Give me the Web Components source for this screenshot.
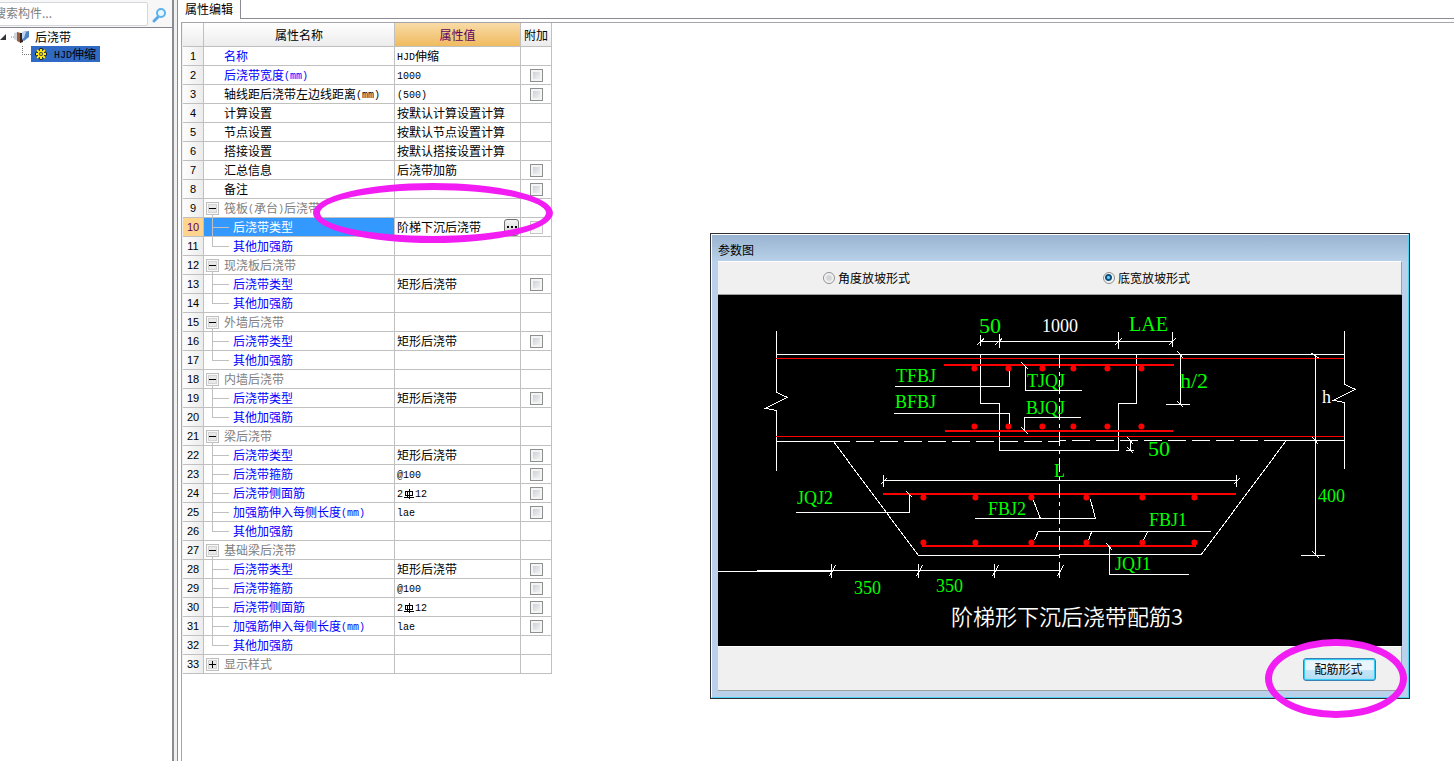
<!DOCTYPE html>
<html lang="zh-CN">
<head>
<meta charset="utf-8">
<title>属性编辑</title>
<style>
	html, body { height: 100%; }
	body {
		margin: 0;
		overflow: hidden;
		background: #fff;
		color: #000;
		font: 12px/18px "Noto Sans CJK SC", sans-serif;
	}
</style>
</head>
<body>
<app-shell>
	<component-tree slot="side"></component-tree>
	<tab-panel slot="main" label="属性编辑">
		<property-grid></property-grid>
	</tab-panel>
	<param-dialog slot="over" caption="参数图">
		<slope-options slot="top"></slope-options>
		<section-drawing></section-drawing>
		<aero-button slot="bottom">配筋形式</aero-button>
	</param-dialog>
	<mark-ring slot="over" class="value"></mark-ring>
	<mark-ring slot="over" class="action"></mark-ring>
</app-shell>

<script>
// Base class: clones the markup of the subclass into an open shadow root.
class UIElement extends HTMLElement {
	constructor() {
		super();
		let templateEl = document.createElement('template');
		templateEl.innerHTML = this.markup();
		this.attachShadow({ mode: 'open' }).appendChild(templateEl.content.cloneNode(true));
	}
	markup() { return ''; }
}

// SimSun style half-width latin runs next to the full-width characters.
function mixed(text) {
	return text.replace(/[\x21-\x7e]+/g, '<span class="half">$&</span>');
}

class AppShell extends UIElement {
	markup() {
		return `
			<style>
				:host { display: flex; height: 100%; position: relative; }
				.side { flex: 0 0 172px; overflow: hidden; border-right: 2px solid #8a8b93; }
				.split { flex: 0 0 3px; background: #f0f0f0; border-right: 1px solid #8a8b93; }
				.main { flex: 1; min-width: 0; display: flex; }
				::slotted(tab-panel) { flex: 1; min-width: 0; }
				::slotted(param-dialog) { position: absolute; left: 710px; top: 233px; width: 700px; }
				::slotted(mark-ring) { position: absolute; pointer-events: none; }
				::slotted(.value) { left: 313px; top: 183px; width: 240px; height: 60px; }
				::slotted(.action) { left: 1265px; top: 639px; width: 142px; height: 79px; }
			</style>
			<div class="side"><slot name="side"></slot></div>
			<div class="split"></div>
			<div class="main"><slot name="main"></slot></div>
			<slot name="over"></slot>
			`;
	}
}

class MarkRing extends UIElement {
	markup() {
		return `
			<style>
				:host { display: block; box-sizing: border-box; border: 7px solid #f21df2; border-radius: 50%; }
			</style>
			`;
	}
}

class ComponentTree extends UIElement {
	markup() {
		return `
			<style>
				:host { display: block; }
				.search { display: flex; height: 27px; align-items: center; margin-left: -8px; background: #f7f7f7; border-bottom: 1px solid #85868e; }
				input { flex: 1; min-width: 0; height: 24px; box-sizing: border-box; padding: 0 2px 2px 1px; border: 1px solid #d4d6dc; border-radius: 2px; background: #fff; font: inherit; }
				input::placeholder { color: #808080; }
				.search button { width: 24px; height: 24px; padding: 0; border: 0; background: none; }
				svg { display: block; }
				ul { list-style: none; margin: 0; padding: 0; }
				.row { display: flex; align-items: center; height: 18px; }
				.arrow { margin-right: 4px; }
				.row .name { margin-left: 5px; }
				.leaf { display: flex; align-items: center; }
				.sel { display: flex; align-items: center; height: 16px; padding: 0 4px; background: #316ac5; }
				.sel .name { margin-left: 7px; }
				.half { font: 10px "Liberation Mono", monospace; vertical-align: 1px; }
			</style>
			<div class="search">
				<input type="text" aria-label="搜索构件" placeholder="搜索构件...">
				<button aria-label="搜索">
					<svg width="24" height="24" viewBox="0 0 24 24" fill="none">
						<path d="M10 15L6 19" stroke="#5aa9e6" stroke-width="3" stroke-linecap="round"/>
						<circle cx="13" cy="11" r="4" fill="#eaf6ff" stroke="#5ab4f0" stroke-width="2"/>
					</svg>
				</button>
			</div>
			<ul>
				<li>
					<div class="row">
						<svg class="arrow" width="7" height="8" viewBox="0 0 7 8"><path d="M6 1V7H0Z" fill="#333"/></svg>
						<svg width="19" height="14" viewBox="0 0 19 14">
							<path d="M0 7H4" stroke="#888" stroke-dasharray="1 1"/>
							<path d="M3 3L7 2V11L3 9Z" fill="#cfd6dc"/>
							<path d="M6 2L10 3V13L6 11Z" fill="#a05c3a"/>
							<path d="M9 3H12V12L9 13Z" fill="#35241e"/>
							<path d="M11 2L18 1V7L13 11L11 10Z" fill="#4d82c4"/>
							<path d="M11 2L15 2L13 8L11 9Z" fill="#bcd3ee"/>
						</svg>
						<span class="name">后浇带</span>
					</div>
					<ul>
						<li class="leaf">
							<svg width="31" height="16" viewBox="0 0 31 16"><path d="M22.500 0V8.500H31" fill="none" stroke="#777" stroke-dasharray="1 1"/></svg>
							<div class="sel">
								<svg width="12" height="12" viewBox="0 0 12 12" fill="none">
									<path d="M6 0V12M0 6H12M2 2L10 10M10 2L2 10" stroke="#222" stroke-width="3"/>
									<path d="M6 1V11M1 6H11M2 2L10 10M10 2L2 10" stroke="#ffe916" stroke-width="2"/>
									<circle cx="6" cy="6" r="3" fill="#ffe916"/><circle cx="6" cy="6" r="2" fill="#444"/><circle cx="6" cy="6" r="1" fill="#ffe916"/>
								</svg>
								<span class="name">${mixed('HJD伸缩')}</span>
							</div>
						</li>
					</ul>
				</li>
			</ul>
			`;
	}
}

class TabPanel extends UIElement {
	markup() {
		return `
			<style>
				:host { display: flex; flex-direction: column; }
				.tabs { display: flex; height: 19px; }
				.tab { width: 63px; padding: 0 0 4px 7px; box-sizing: border-box; border: 0; border-right: 1px solid #8a8b93; background: #fff; font: inherit; text-align: left; }
				.rest { flex: 1; border-bottom: 1px solid #8a8b93; }
				.body { flex: 1; margin: 3px 0 0 3px; border: solid #a5a6ac; border-width: 1px 0 0 1px; }
			</style>
			<div class="tabs"><button class="tab"></button><div class="rest"></div></div>
			<div class="body"><slot></slot></div>
			`;
	}
	connectedCallback() {
		this.shadowRoot.querySelector('.tab').textContent = this.getAttribute('label');
	}
}

// kind: b = plain blue, k = plain black, g = group, c = child, e = last child, + = closed group
const ROWS = [
	['b', '名称', 'HJD伸缩', 0],
	['b', '后浇带宽度(mm)', '1000', 1],
	['k', '轴线距后浇带左边线距离(mm)', '(500)', 1],
	['k', '计算设置', '按默认计算设置计算', 0],
	['k', '节点设置', '按默认节点设置计算', 0],
	['k', '搭接设置', '按默认搭接设置计算', 0],
	['k', '汇总信息', '后浇带加筋', 1],
	['k', '备注', '', 1],
	['g', '筏板(承台)后浇带', '', 0],
	['c', '后浇带类型', '阶梯下沉后浇带', 1, 'current'],
	['e', '其他加强筋', '', 0],
	['g', '现浇板后浇带', '', 0],
	['c', '后浇带类型', '矩形后浇带', 1],
	['e', '其他加强筋', '', 0],
	['g', '外墙后浇带', '', 0],
	['c', '后浇带类型', '矩形后浇带', 1],
	['e', '其他加强筋', '', 0],
	['g', '内墙后浇带', '', 0],
	['c', '后浇带类型', '矩形后浇带', 1],
	['e', '其他加强筋', '', 0],
	['g', '梁后浇带', '', 0],
	['c', '后浇带类型', '矩形后浇带', 1],
	['c', '后浇带箍筋', '@100', 1],
	['c', '后浇带侧面筋', '2#12', 1],
	['c', '加强筋伸入每侧长度(mm)', 'lae', 1],
	['e', '其他加强筋', '', 0],
	['g', '基础梁后浇带', '', 0],
	['c', '后浇带类型', '矩形后浇带', 1],
	['c', '后浇带箍筋', '@100', 1],
	['c', '后浇带侧面筋', '2#12', 1],
	['c', '加强筋伸入每侧长度(mm)', 'lae', 1],
	['e', '其他加强筋', '', 0],
	['+', '显示样式', '', 0]
];

// Rebar grade mark that stands between count and diameter.
const REBAR = '<svg class="rebar" width="12" height="12" viewBox="0 0 12 12" fill="none" stroke="#000" shape-rendering="crispEdges"><path d="M2.500 3.500H9.500V7.500H2.500ZM6.500 1V11M4.500 3V10M1 9.500H11"/></svg>';

class PropertyGrid extends UIElement {
	markup() {
		return `
			<style>
				:host { display: block; }
				table { table-layout: fixed; width: 370px; border-collapse: separate; border-spacing: 0; border-left: 1px solid #f0f0f0; }
				.c1 { width: 21px; } .c2 { width: 191px; } .c3 { width: 126px; } .c4 { width: 31px; }
				th, td { box-sizing: border-box; height: 19px; padding: 0; border: solid #c0c0c0; border-width: 0 1px 1px 0; font-weight: normal; line-height: 18px; white-space: nowrap; overflow: hidden; }
				thead th { height: 24px; background: linear-gradient(#fff, #ececec); }
				thead .hot { background: linear-gradient(#f8dba6, #f0bb5f); color: #5c0060; }
				tbody th { background: linear-gradient(90deg, #fdfdfd, #ececec); font: 11px/18px "Liberation Sans", sans-serif; text-align: center; }
				.name { display: flex; align-items: center; height: 18px; padding-left: 20px; }
				.b, .c, .e { color: #00f; }
				.g { color: #808080; }
				.g .name, .c .name, .e .name { padding-left: 0; }
				.name svg { flex: none; display: block; }
				.name button { flex: none; width: 20px; height: 18px; padding: 0; border: 0; background: none; }
				.val { padding-left: 2px; }
				.half { font: 10px "Liberation Mono", monospace; vertical-align: 1px; }
				.rebar { vertical-align: -2px; }
				.box { text-align: center; }
				input[type=checkbox] { appearance: none; display: block; width: 13px; height: 13px; margin: 0 auto; border: 1px solid #8e8f8f; outline: 2px solid #f4f4f4; outline-offset: -3px; background: linear-gradient(135deg, #c4c8cf, #fafafa); }
				.current th { background: #ffd48c; color: #5c0060; }
				.current .c { background: #39f; color: #fff; }
				.edit { display: flex; align-items: center; height: 18px; }
				.edit input { flex: 1; min-width: 0; padding: 0; border: 0; background: none; font: inherit; color: inherit; }
				.edit button { width: 15px; height: 17px; margin-right: 1px; padding: 0; border: 1px solid #707070; border-radius: 3px; background: linear-gradient(#f4f4f4, #d2d2d2); }
				.edit svg { display: block; margin: 0 auto; }
				.current input[type=checkbox] { opacity: 0.5; }
			</style>
			<table>
				<colgroup><col class="c1"><col class="c2"><col class="c3"><col class="c4"></colgroup>
				<thead><tr><th></th><th>属性名称</th><th class="hot">属性值</th><th>附加</th></tr></thead>
				<tbody>${ROWS.map((row, i) => this.row(row, i + 1)).join('')}</tbody>
			</table>
			`;
	}
	row([kind, name, value, box, state], n) {
		let group = kind == 'g' || kind == '+';
		let cell = group ? this.toggle(kind) : kind == 'c' || kind == 'e' ? this.branch(kind) : '';
		let val = mixed(value.replace('#', '\u0001')).replace('\u0001', REBAR);
		if (state) {
			val = `<div class="edit"><input type="text" aria-label="${name}" value="${value}">
				<button aria-label="选择"><svg width="10" height="2"><path d="M0 0H2V2H0ZM4 0H6V2H4ZM8 0H10V2H8Z"/></svg></button></div>`;
		}
		return `<tr class="${state || ''}">
			<th scope="row">${n}</th>
			<td class="${group ? 'g' : kind}"><div class="name">${cell}<span>${mixed(name)}</span></div></td>
			<td class="val">${val}</td>
			<td class="box">${box ? `<input type="checkbox" aria-label="附加 ${n}">` : ''}</td>
		</tr>`;
	}
	toggle(kind) {
		let open = kind == 'g';
		return `<button aria-label="${open ? '收起' : '展开'}"><svg width="20" height="18" viewBox="0 0 20 18" fill="none" shape-rendering="crispEdges">
			<rect x="2.500" y="3.500" width="12" height="12" fill="#f8f8f8" stroke="#c0c0c0"/>
			<rect x="4.500" y="5.500" width="8" height="8" fill="#e8e8e8" stroke="#d4d4d4"/>
			<path d="M5 9.500H12${open ? '' : 'M8.500 6V13'}" stroke="#000"/>
			${open ? '<path d="M8.500 16V18" stroke="#c0c0c0"/>' : ''}
		</svg></button>`;
	}
	branch(kind) {
		return `<svg width="29" height="18" viewBox="0 0 29 18" fill="none" stroke="#c0c0c0" shape-rendering="crispEdges">
			<path d="M8.500 0V${kind == 'e' ? 10 : 18}M8 9.500H25"/></svg>`;
	}
}

class ParamDialog extends UIElement {
	markup() {
		return `
			<style>
				:host { display: block; box-sizing: border-box; border: 1px solid #2d2d33; background: #b9d1ea; }
				.frame { border: 1px solid; border-color: #fff #4cd3f5 #4cd3f5 #fff; padding: 0 6px 6px; background: linear-gradient(#99b4d1, #b9d1ea 27px, #b9d1ea); }
				.caption { height: 26px; line-height: 30px; }
				.top, .bottom { background: #f0f0f0; border: solid; border-width: 1px 1px 1px 0; border-color: #fff #a0a0a0 #a0a0a0; }
				.bottom { display: flex; justify-content: flex-end; padding: 11px 25px 9px; }
			</style>
			<div class="frame">
				<div class="caption"></div>
				<div class="top"><slot name="top"></slot></div>
				<slot></slot>
				<div class="bottom"><slot name="bottom"></slot></div>
			</div>
			`;
	}
	connectedCallback() {
		this.shadowRoot.querySelector('.caption').textContent = this.getAttribute('caption');
	}
}

class SlopeOptions extends UIElement {
	markup() {
		return `
			<style>
				:host { display: grid; grid-template-columns: 280px 1fr; height: 32px; padding-left: 105px; }
				label { display: flex; align-items: center; gap: 3px; }
				input { appearance: none; box-sizing: border-box; width: 12px; height: 12px; margin: 0; border: 1px solid #8e8f8f; border-radius: 50%; background: radial-gradient(#d4d6da 30%, #fafafa 65%); }
				input:checked { background: radial-gradient(circle at 45% 45%, #6fd0f7 0 1px, #0d4f7e 2px 3px, #f4f4f4 4px); }
			</style>
			<label><input type="radio" name="slope">角度放坡形式</label>
			<label><input type="radio" name="slope" checked>底宽放坡形式</label>
			`;
	}
}

class AeroButton extends UIElement {
	markup() {
		return `
			<style>
				:host { display: block; }
				button { display: block; width: 73px; height: 23px; padding: 0 2px 2px 0; border: 1px solid #3c7fb1; border-radius: 3px; box-shadow: inset 0 0 0 1px #35cdf8, inset 0 0 2px 1px #8fe2fb; background: linear-gradient(#eaf6fd 50%, #c7e6f8 50%, #b3dcf4); font: inherit; line-height: 20px; color: #000; }
			</style>
			<button><slot></slot></button>
			`;
	}
}

class SectionDrawing extends UIElement {
	markup() {
		let dots = (xs, y) => xs.map(x => `<circle cx="${x}" cy="${y}" r="3"/>`).join('');
		let upper = [974, 1008, 1042, 1073, 1107, 1141];
		let lower = [923, 975, 1031, 1086, 1142, 1194];
		return `
			<style>
				:host { display: block; background: #000; }
				svg { display: block; width: 100%; height: auto; }
				.line { fill: none; stroke: #fff; shape-rendering: crispEdges; }
				.bar { fill: none; stroke: #f00; shape-rendering: crispEdges; }
				.thick { stroke-width: 2; }
				.dot { fill: #f00; }
				text { font: 18px "Liberation Serif", serif; fill: #0f0; }
				.mid { font-size: 20px; }
				.big { font-size: 22px; }
				.w { fill: #fff; }
				.title { font: 22px "Noto Sans CJK SC", sans-serif; font-weight: 350; fill: #fff; }
			</style>
			<svg viewBox="718 295 684 351">
				<g transform="translate(.4 .4)">
					<!-- slab edges and break lines -->
					<path class="line" d="M776 331V392L787 397L765 408L776 410V471M1344 331V384L1355 389L1333 400L1344 402V469M776 354H1344"/>
					<path class="line" d="M776 441H850M1264 440H1344"/>
					<path class="line" stroke-dasharray="18 6" d="M856 441H1059M1072 440H1260"/>
					<path class="line" d="M1059 440H1066"/>
					<!-- strip outline and pit -->
					<path class="line" d="M980 354V403H999V450H1118V403H1136V354"/>
					<path class="line" d="M833 441L918 555H1059V554H1201L1286 440"/>
					<!-- bars -->
					<path class="bar" d="M776 358H1344M776 436H1344"/>
					<path class="bar thick" d="M944 364.500H1174M945 430.500H1173M883 493.500H1236M922 545.500H1196"/>
					<g class="dot">${dots(upper, 368)}${dots(upper, 426)}${dots(lower, 497)}${dots(lower, 542)}</g>
					<!-- axis -->
					<path class="line" stroke-dasharray="14 4 4 4" d="M1059 354V578"/>
					<!-- dimensions -->
					<path class="line" d="M980 341H1173M980 335V346M999 334V348M1118 332V349M1172 332V347"/>
					<path class="line" d="M977 344L984 338M995 344L1002 338M1114 345L1121 338M1168 345L1175 338"/>
					<path class="line" d="M1180 354V404M1166 404H1190M1177 351L1183 358M1177 401L1183 407"/>
					<path class="line" d="M1130 440V450M1126 450H1134M1127 437L1133 444M1127 447L1133 453"/>
					<path class="line" d="M1315 354V555M1301 555H1325M1311 353L1319 358M1312 437L1318 444M1312 551L1319 558"/>
					<path class="line" d="M883 480H1236M883 475V487M1236 475V487M880 484L886 478M1233 484L1239 478"/>
					<path class="line" d="M718 571H832M757 570H1059M831 564V578M918 564V578M994 564V578M1059 564V578"/>
					<path class="line" d="M829 576L835 565M916 576L922 565M992 576L998 565M1057 576L1063 565"/>
					<!-- leaders -->
					<path class="line" d="M895 386H1009V371M894 413H1009V424"/>
					<path class="line" d="M1082 390H1025V366M1021 362L1028 369M1081 417H1024V430M1021 427L1028 434"/>
					<path class="line" d="M796 512H909V494M906 491L912 497"/>
					<path class="line" d="M975 518H1095L1090 499M1033 500L1040 518"/>
					<path class="line" d="M1211 531H1038L1034 540M1091 532L1088 540M1147 532L1143 540"/>
					<path class="line" d="M1109 546V574H1189M1106 543L1112 550"/>
				</g>
				<text class="big" x="979" y="333">50</text>
				<text class="w" x="1042" y="332">1000</text>
				<text class="mid" x="1129" y="331">LAE</text>
				<text x="896" y="382">TFBJ</text>
				<text x="895" y="408">BFBJ</text>
				<text x="1027" y="387">TJQJ</text>
				<text x="1026" y="414">BJQJ</text>
				<text class="big" x="1180" y="388">h/2</text>
				<text class="w" x="1322" y="403">h</text>
				<text class="big" x="1148" y="456">50</text>
				<text x="1054" y="477">L</text>
				<text x="797" y="504">JQJ2</text>
				<text x="988" y="515">FBJ2</text>
				<text x="1149" y="526">FBJ1</text>
				<text x="1318" y="502">400</text>
				<text x="1115" y="570">JQJ1</text>
				<text x="854" y="594">350</text>
				<text x="936" y="592">350</text>
				<text class="title" x="951" y="625">阶梯形下沉后浇带配筋3</text>
			</svg>
			`;
	}
}

customElements.define('app-shell', AppShell);
customElements.define('mark-ring', MarkRing);
customElements.define('component-tree', ComponentTree);
customElements.define('tab-panel', TabPanel);
customElements.define('property-grid', PropertyGrid);
customElements.define('param-dialog', ParamDialog);
customElements.define('slope-options', SlopeOptions);
customElements.define('aero-button', AeroButton);
customElements.define('section-drawing', SectionDrawing);
</script>
</body>
</html>
